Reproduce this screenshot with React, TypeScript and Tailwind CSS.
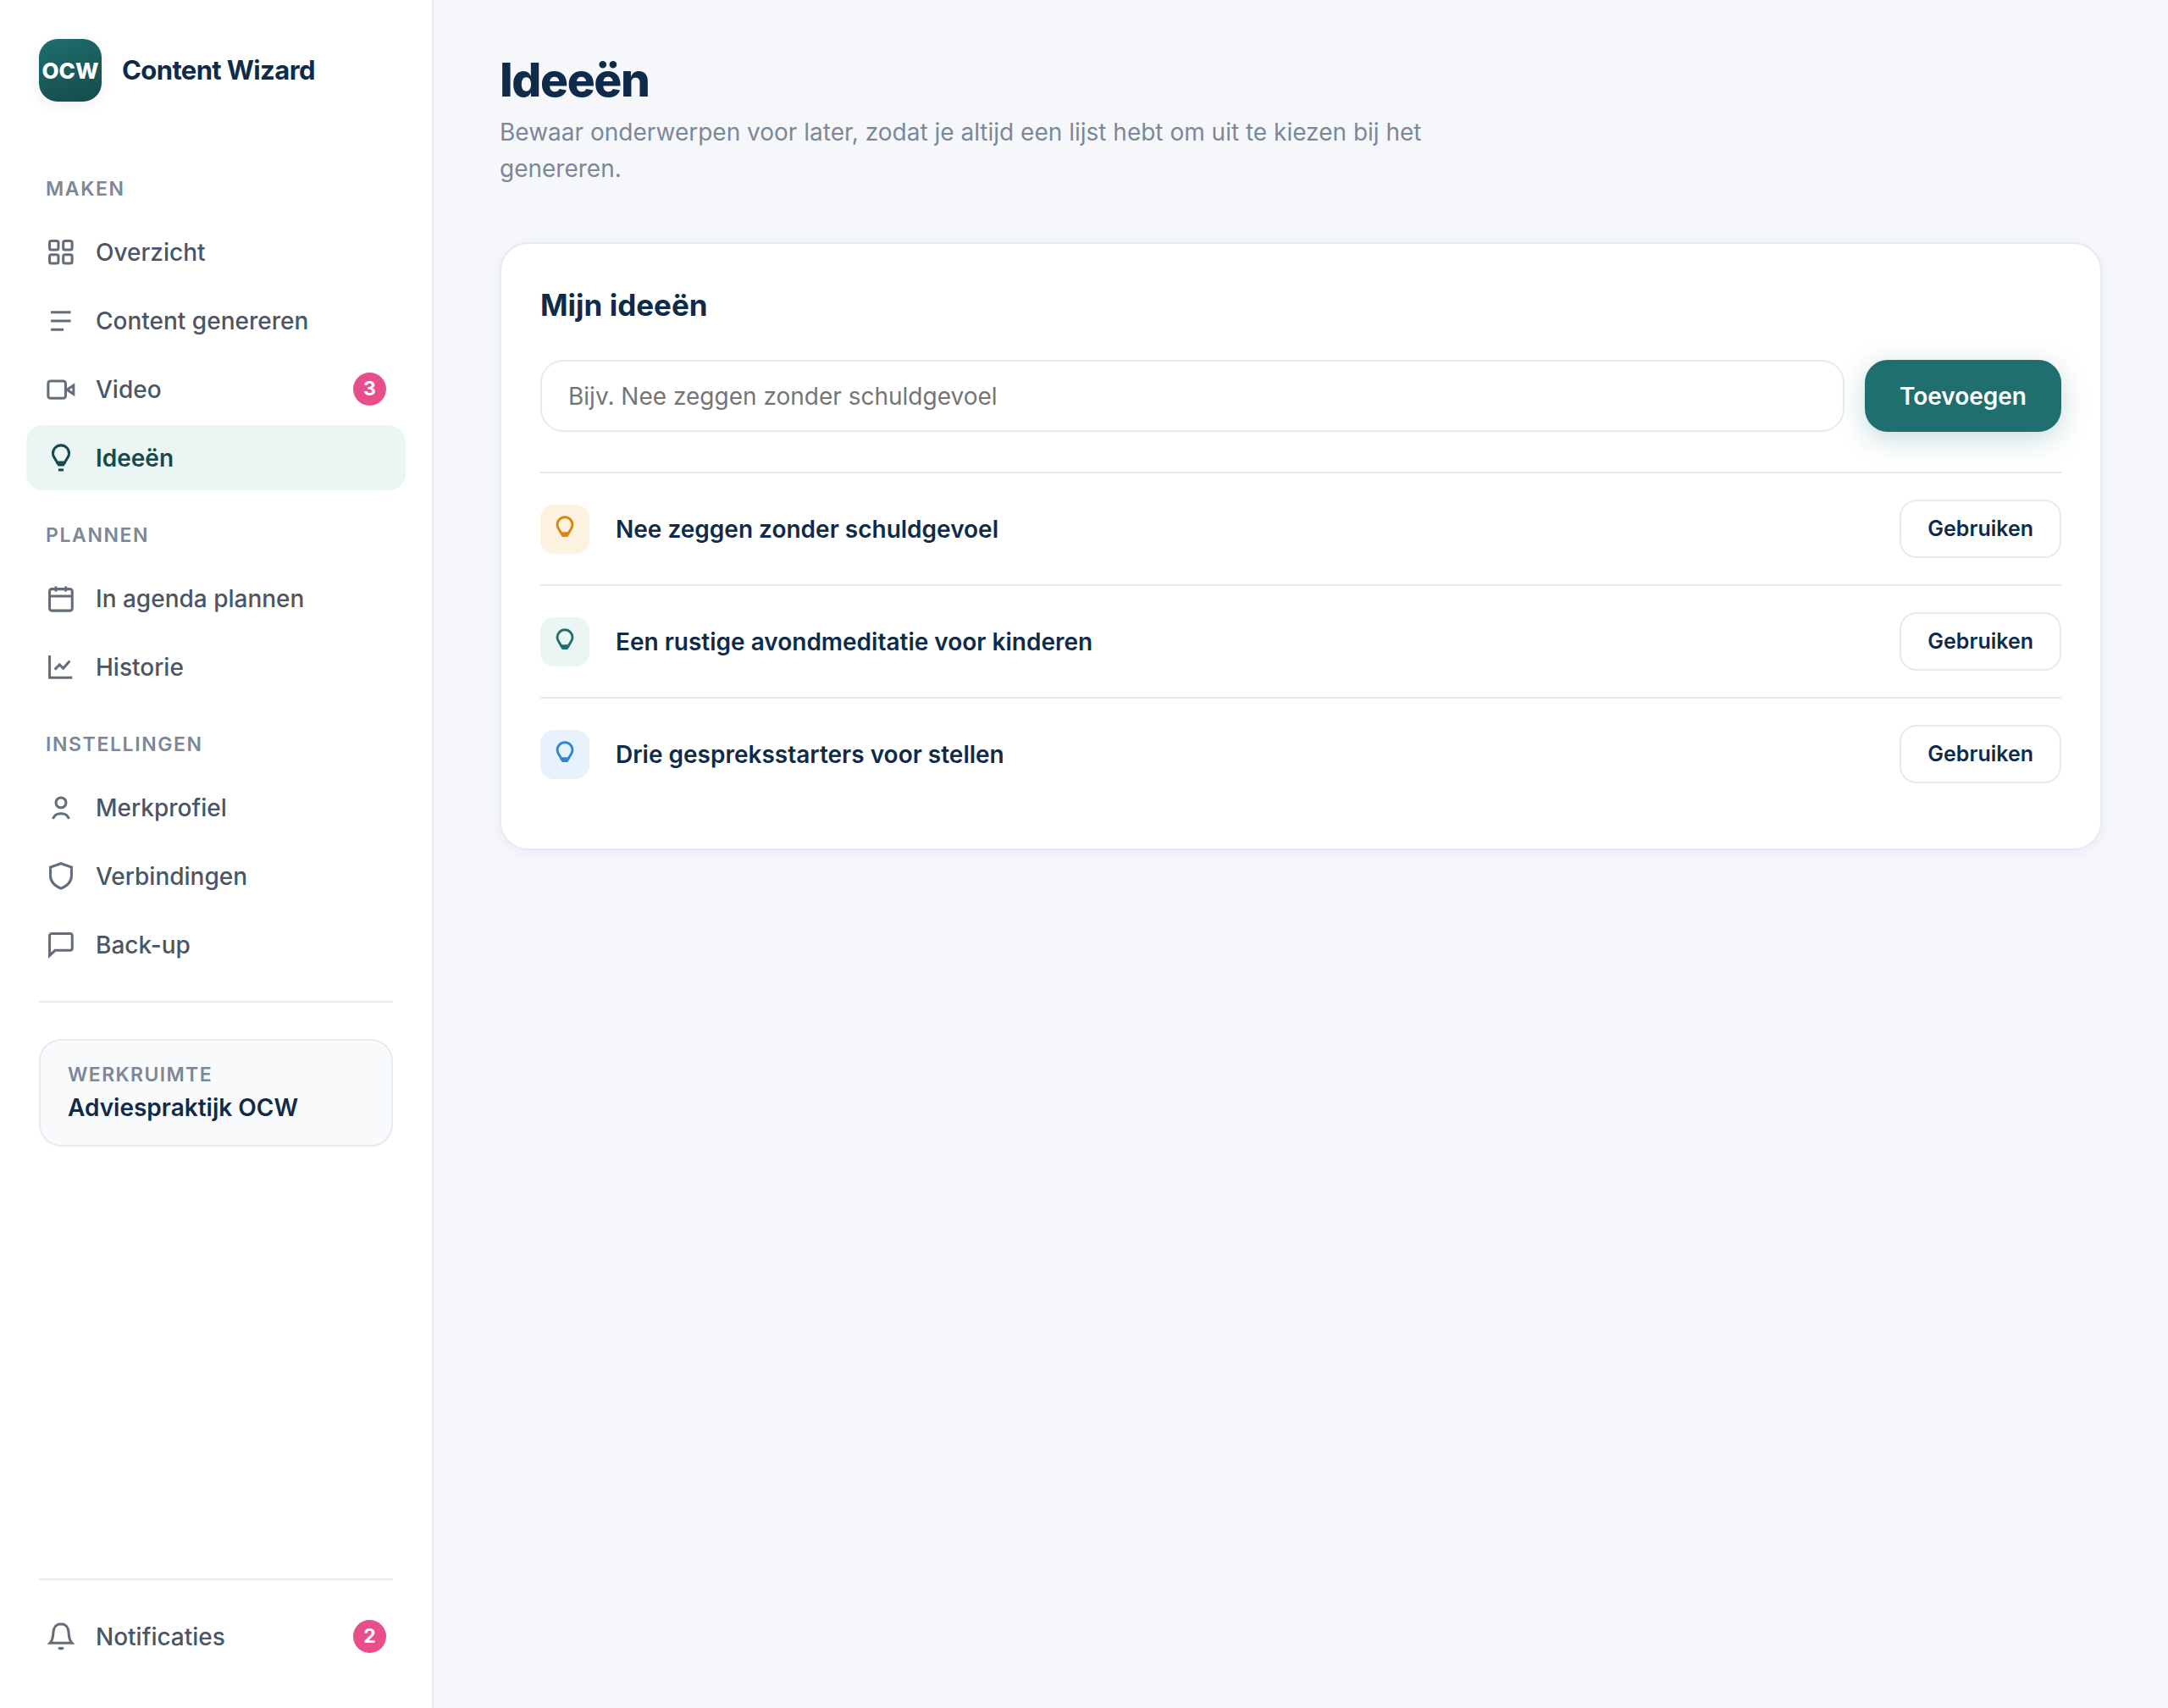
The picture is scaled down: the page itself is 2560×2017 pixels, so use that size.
import { useState } from 'react';
import type { FormEvent, ReactNode } from 'react';

type IconName = 'grid' | 'lines' | 'video' | 'bulb' | 'bulbSmall' | 'calendar' | 'chart' | 'user' | 'shield' | 'chat' | 'bell';

const bulbShape = (
    <path d="M10 1.1a5.6 5.6 0 0 0-5.6 5.8c0 2.6 1.9 3.6 2.9 6.1h5.4c1-2.5 2.9-3.5 2.9-6.1A5.6 5.6 0 0 0 10 1.1zM7.3 13l1.200 1.700h3l1.200-1.700" />
);

const icons: Record<IconName, ReactNode> = {
    grid: (
        <>
            <rect x="2.1" y="2.1" width="6.1" height="6.1" rx="1.2" />
            <rect x="11.6" y="2.1" width="6.1" height="6.1" rx="1.2" />
            <rect x="2.1" y="11.6" width="6.1" height="6.1" rx="1.2" />
            <rect x="11.6" y="11.6" width="6.1" height="6.1" rx="1.2" />
        </>
    ),
    lines: <path d="M3 4h13.8M3 10h13.8M3 16h8.8" />,
    video: (
        <>
            <rect x="1.1" y="4.1" width="12.1" height="11.9" rx="1.6" />
            <path d="M14.2 10.1l4.5-3v6z" />
        </>
    ),
    bulb: (
        <>
            {bulbShape}
            <path d="M8.2 18.2h3.6" />
        </>
    ),
    bulbSmall: bulbShape,
    calendar: (
        <>
            <rect x="2.1" y="3.3" width="15.7" height="15" rx="1.6" />
            <path d="M2.1 8.2h15.7M6.5 1.4V5M13.3 1.4V5" />
        </>
    ),
    chart: <path d="M2.1 1.7v15.5h15.7M5.7 11.5L9 8.2l2.6 2.6 4.5-5.2" />,
    user: (
        <>
            <circle cx="10" cy="6.4" r="3.5" />
            <path d="M4.4 17.7c.8-2.2 2.9-3.7 5.6-3.7s4.8 1.5 5.6 3.7" />
        </>
    ),
    shield: <path d="M10 1l7.3 2.6v5.9c0 4.2-3 7-7.3 8.8-4.3-1.8-7.3-4.6-7.3-8.8V3.6z" />,
    chat: <path d="M3.6 2.1h12.7a1.5 1.5 0 0 1 1.5 1.5v8.6a1.5 1.5 0 0 1-1.5 1.5H5.9l-3.8 3.6V3.6a1.5 1.5 0 0 1 1.5-1.5z" />,
    bell: (
        <>
            <path d="M10 1C6.7 1 4.9 3.6 4.7 6.7c-.2 3.8-.7 6-2.3 7.6h15.2c-1.6-1.6-2.1-3.8-2.3-7.6C15.1 3.6 13.3 1 10 1z" />
            <path d="M8.3 17.5q1.7 1.3 3.4 0" />
        </>
    ),
};

function Icon({ name, className }: { name: IconName; className: string }) {
    return (
        <svg viewBox="0 0 20 20" fill="none" stroke="currentColor" strokeWidth="1.8" className={className} aria-hidden="true">
            {icons[name]}
        </svg>
    );
}

interface NavEntry {
    label: string;
    icon: IconName;
    badge?: number;
}

const sections: { title: string; items: NavEntry[] }[] = [
    {
        title: 'Maken',
        items: [
            { label: 'Overzicht', icon: 'grid' },
            { label: 'Content genereren', icon: 'lines' },
            { label: 'Video', icon: 'video', badge: 3 },
            { label: 'Ideeën', icon: 'bulb' },
        ],
    },
    {
        title: 'Plannen',
        items: [
            { label: 'In agenda plannen', icon: 'calendar' },
            { label: 'Historie', icon: 'chart' },
        ],
    },
    {
        title: 'Instellingen',
        items: [
            { label: 'Merkprofiel', icon: 'user' },
            { label: 'Verbindingen', icon: 'shield' },
            { label: 'Back-up', icon: 'chat' },
        ],
    },
];

const tones = [
    'bg-[#fdf2e0] text-[#d9860b]',
    'bg-[#ebf5f4] text-[#1f6f6e]',
    'bg-[#e8f2fd] text-[#2f86d6]',
];

function NavItem({ item, active }: { item: NavEntry; active?: boolean }) {
    return (
        <a
            href="#"
            aria-current={active ? 'page' : undefined}
            className={`flex h-[77px] items-center gap-6 rounded-[20px] pr-[23px] pl-6 text-[28px] ${
                active ? 'bg-[#ebf5f4] font-semibold text-[#154a4a]' : 'font-medium text-[#4a5565]'
            }`}
        >
            <Icon name={item.icon} className={active ? 'size-[34px] shrink-0' : 'size-[34px] shrink-0 opacity-85'} />
            <span className="flex-1">{item.label}</span>
            {item.badge && (
                <span className="flex size-[39px] items-center justify-center rounded-full bg-[#e84f8a] text-[23px] font-bold text-white">
                    {item.badge}
                </span>
            )}
        </a>
    );
}

export default function App() {
    const [ideas, setIdeas] = useState([
        'Nee zeggen zonder schuldgevoel',
        'Een rustige avondmeditatie voor kinderen',
        'Drie gespreksstarters voor stellen',
    ]);
    const [draft, setDraft] = useState('');

    const handleSubmit = (e: FormEvent) => {
        e.preventDefault();
        if (!draft.trim()) return;
        setIdeas([...ideas, draft.trim()]);
        setDraft('');
    };

    return (
        <div className="flex min-h-screen bg-[#f5f7fb] font-['Inter',sans-serif] text-[#0f2b4a]">
            <aside className="flex w-[512px] shrink-0 flex-col border-r-2 border-[#e6eaf1] bg-white px-[46px] py-[46px]">
                <div className="flex items-center gap-6">
                    <div className="flex size-[74px] items-center justify-center rounded-[22px] bg-linear-160 from-[#1f6f6e] to-[#154a4a] text-[26px] font-extrabold text-white shadow-[0_4px_16px_rgba(15,43,74,0.07)]">
                        OCW
                    </div>
                    <span className="text-[31px] font-bold tracking-[-0.02em]">Content Wizard</span>
                </div>

                <nav className="-mx-[15px] mt-[54px] flex flex-col gap-1">
                    {sections.map((section) => (
                        <div key={section.title} className="flex flex-col gap-1">
                            <h2 className="px-[23px] pt-[31px] pb-3.5 text-[23px] leading-[36px] font-semibold tracking-[0.07em] text-[#7c8798] uppercase">
                                {section.title}
                            </h2>
                            {section.items.map((item) => (
                                <NavItem key={item.label} item={item} active={item.label === 'Ideeën'} />
                            ))}
                        </div>
                    ))}
                </nav>

                <div className="mt-7 border-t-2 border-[#e6eaf1] pt-[43px]">
                    <div className="rounded-[26px] border-2 border-[#e6eaf1] bg-[#f9fafc] px-8 py-[22px]">
                        <p className="text-[23px] leading-[36px] font-semibold tracking-[0.06em] text-[#7c8798] uppercase">Werkruimte</p>
                        <p className="text-[28px] leading-[43px] font-semibold">Adviespraktijk OCW</p>
                    </div>
                </div>

                <div className="mt-auto border-t-2 border-[#e6eaf1] pt-7">
                    <div className="-mx-[15px]">
                        <NavItem item={{ label: 'Notificaties', icon: 'bell', badge: 2 }} />
                    </div>
                </div>
            </aside>

            <main className="min-w-0 flex-1 px-[78px] pt-[62px]">
                <header className="max-w-[1130px]">
                    <h1 className="text-[55px] leading-[64px] font-extrabold tracking-tight">Ideeën</h1>
                    <p className="mt-[9px] text-[28px] leading-[43px] text-[#7c8798]">
                        Bewaar onderwerpen voor later, zodat je altijd een lijst hebt om uit te kiezen bij het genereren.
                    </p>
                </header>

                <section className="mt-[65px] rounded-[34px] border-2 border-[#e6eaf1] bg-white p-[46px] shadow-[0_4px_16px_rgba(15,43,74,0.05)]">
                    <h2 className="text-[35px] leading-[52px] font-bold">Mijn ideeën</h2>

                    <form onSubmit={handleSubmit} className="mt-[39px] flex gap-6">
                        <input
                            type="text"
                            aria-label="Nieuw idee"
                            value={draft}
                            onChange={(e) => setDraft(e.target.value)}
                            placeholder="Bijv. Nee zeggen zonder schuldgevoel"
                            className="h-[85px] min-w-0 flex-1 rounded-[27px] border-2 border-[#e6eaf1] px-[31px] text-[28px] outline-none placeholder:text-[#757575] focus:border-[#1f6f6e]"
                        />
                        <button
                            type="submit"
                            className="h-[85px] rounded-[27px] bg-[#1f6f6e] px-[41px] text-[28px] font-semibold text-white shadow-[0_8px_32px_rgba(31,111,110,0.25)]"
                        >
                            Toevoegen
                        </button>
                    </form>

                    <ul className="mt-[47px]">
                        {ideas.map((idea, i) => (
                            <li key={idea} className="flex items-center gap-[31px] border-t-2 border-[#e6eaf1] py-[31px]">
                                <span className={`flex size-[58px] items-center justify-center rounded-[16px] ${tones[i % tones.length]}`}>
                                    <Icon name="bulbSmall" className="size-8" />
                                </span>
                                <span className="flex-1 text-[28px] font-semibold">{idea}</span>
                                <button type="button" className="h-[69px] rounded-[20px] border-2 border-[#e6eaf1] bg-white px-[31px] text-[25px] font-semibold">
                                    Gebruiken
                                </button>
                            </li>
                        ))}
                    </ul>
                </section>
            </main>
        </div>
    );
}
